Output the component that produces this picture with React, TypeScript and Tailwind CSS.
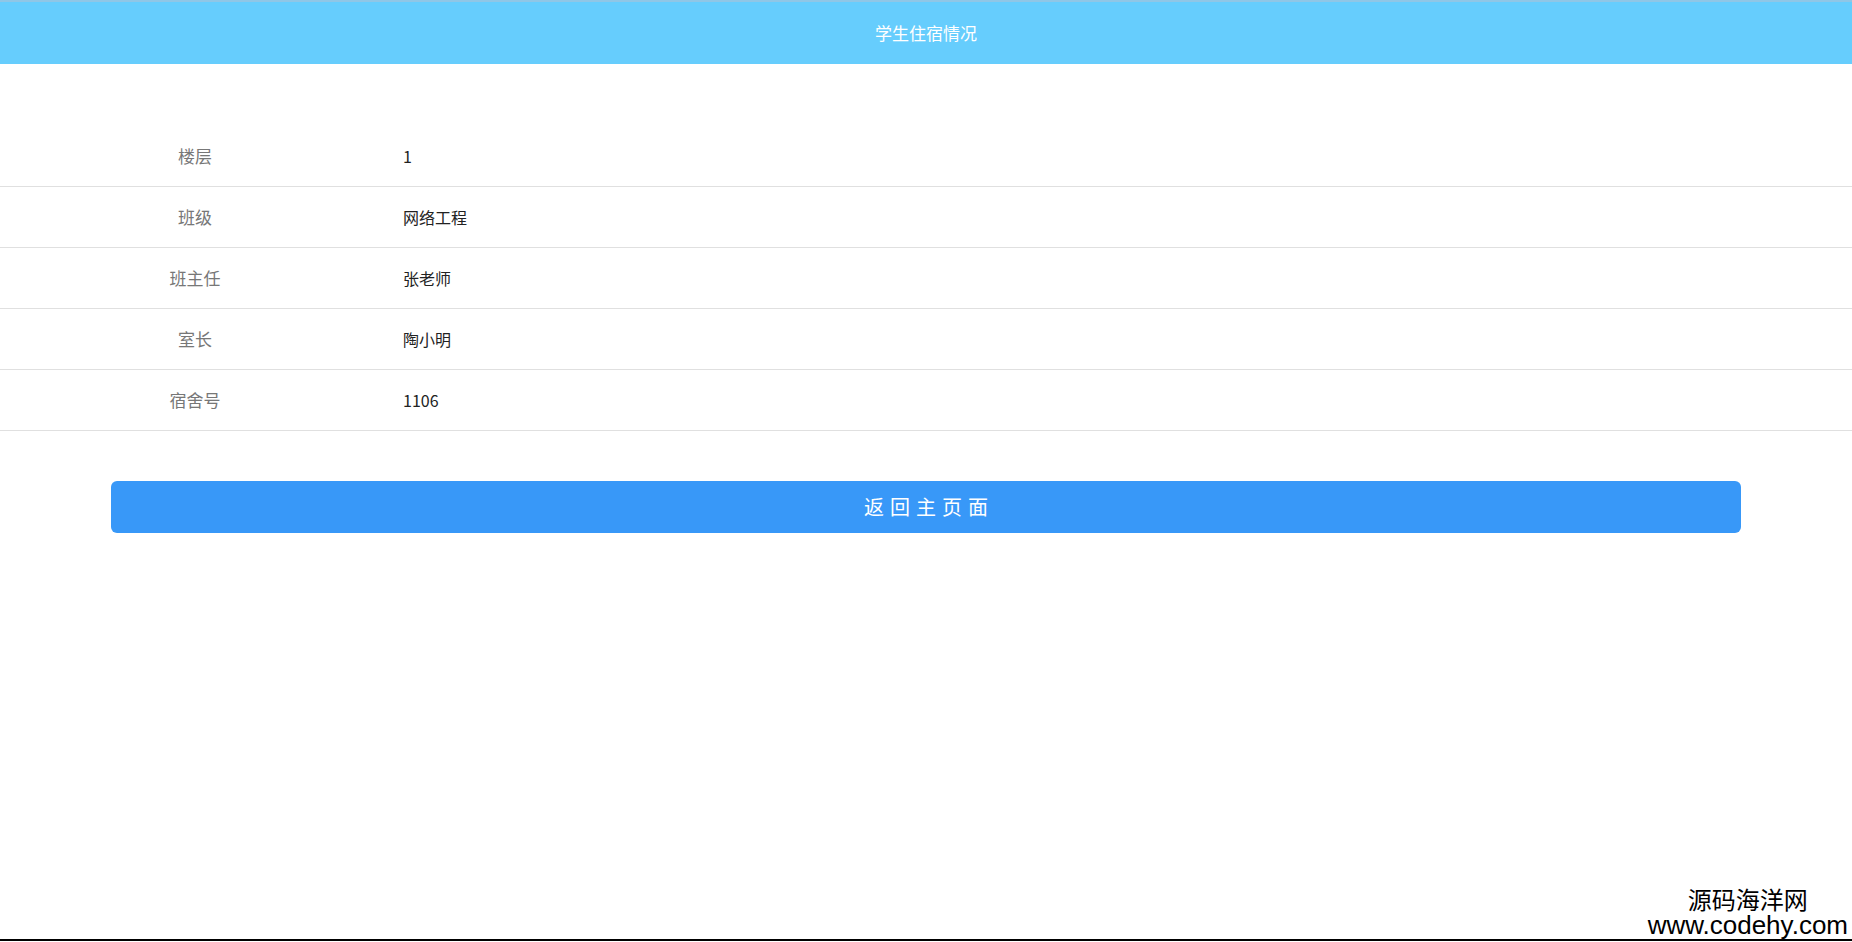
import React from "react";

const rows = [
  { label: "楼层", value: "1" },
  { label: "班级", value: "网络工程" },
  { label: "班主任", value: "张老师" },
  { label: "室长", value: "陶小明" },
  { label: "宿舍号", value: "1106" },
];

const App = () => {
  return (
    <div className="relative h-[942px] w-full overflow-hidden bg-white font-['Noto_Sans_CJK_SC','Noto_Sans',sans-serif]">
      <header className="flex h-[64px] items-center justify-center border-t-2 border-[#8fc6e6] bg-[#66cdfd]">
        <h1 className="text-[17px] font-normal text-white">学生住宿情况</h1>
      </header>

      <div className="mt-[62px]">
        {rows.map((row) => (
          <div
            key={row.label}
            className="flex h-[61px] items-center border-b border-[#e0e0e0]"
          >
            <div className="w-[390px] text-center text-[17px] text-[#777]">
              {row.label}
            </div>
            <div className="pl-[13px] text-[16px] text-[#222]">{row.value}</div>
          </div>
        ))}
      </div>

      <div className="mx-[111px] mt-[50px]">
        <button className="flex h-[52px] w-full items-center justify-center rounded-[6px] bg-[#3898f8] pl-[6px] text-[20px] tracking-[6px] text-white">
          返回主页面
        </button>
      </div>

      {/* watermark */}
      <div className="absolute bottom-[4px] right-[4px] flex flex-col items-center text-black">
        <span className="text-[24px] leading-[26px]">源码海洋网</span>
        <span className="font-['Liberation_Sans',sans-serif] text-[26px] leading-[26px]">www.codehy.com</span>
      </div>
      <div className="absolute bottom-px left-0 h-[2px] w-full bg-black" />
    </div>
  );
};

export default App;
